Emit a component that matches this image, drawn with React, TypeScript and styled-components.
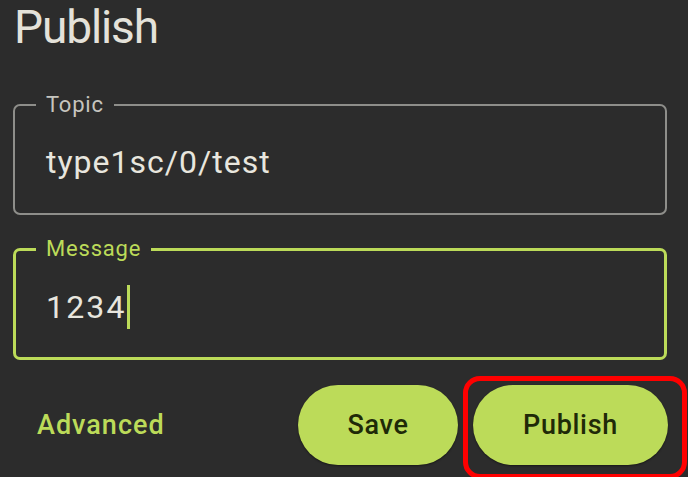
import styled, { createGlobalStyle } from 'styled-components'

const GlobalStyle = createGlobalStyle`
    html, body {
        margin: 0;
        padding: 0;
        background: #ffffff;
    }
    * {
        box-sizing: border-box;
    }
`

const lime = '#bcdb59'

const Screen = styled.main`
    height: 477px;
    background: #2c2c2c;
    padding: 0 21px 0 13px;
    display: flex;
    flex-direction: column;
    font-family: Roboto, 'Noto Sans', sans-serif;
    overflow: hidden;
`

const Title = styled.h1`
    margin: 0 0 0 1px;
    font-size: 46px;
    line-height: 54px;
    font-weight: 400;
    letter-spacing: -1.1px;
    color: #e4e2da;
`

// outlined text field, the legend sits in the top border
const Field = styled.fieldset<{ $focused?: boolean }>`
    margin: ${(p) => (p.$focused ? '22px' : '39px')} 0 0;
    padding: ${(p) => (p.$focused ? '24px 0 28px 0' : '25px 0 31px 0')};
    border: ${(p) => (p.$focused ? `3px solid ${lime}` : '2px solid #8e8e8a')};
    border-radius: 7px;
    min-width: 0;
`

const Label = styled.legend<{ $focused?: boolean }>`
    margin-left: ${(p) => (p.$focused ? '20px' : '21px')};
    padding: 0 10px;
    font-size: 22px;
    line-height: 24px;
    letter-spacing: 0.8px;
    color: ${(p) => (p.$focused ? lime : '#c6c5bf')};
`

const Value = styled.div<{ $indent: number; $tracking: number }>`
    padding-left: ${(p) => p.$indent}px;
    font-size: 32px;
    line-height: 40px;
    letter-spacing: ${(p) => p.$tracking}px;
    color: #e8e6de;
    display: flex;
    align-items: center;
`

const Caret = styled.span`
    display: inline-block;
    width: 3px;
    height: 44px;
    background: ${lime};
`

const Actions = styled.div`
    margin-top: 25px;
    display: flex;
    align-items: center;
    gap: 15px;
`

const TextButton = styled.button`
    margin-right: auto;
    padding: 0 0 0 24px;
    background: none;
    border: none;
    font-family: inherit;
    font-size: 27px;
    font-weight: 500;
    letter-spacing: 1px;
    color: ${lime};
`

const Pill = styled.button<{ $width: number }>`
    width: ${(p) => p.$width}px;
    height: 80px;
    border: none;
    border-radius: 40px;
    background: ${lime};
    box-shadow: 0 1px 2px rgba(0, 0, 0, 0.45);
    font-family: inherit;
    font-size: 27px;
    font-weight: 500;
    letter-spacing: 0.7px;
    color: #1f2a08;
`

const Highlight = styled.div`
    position: relative;
    margin-right: -1px;

    &::after {
        content: '';
        position: absolute;
        left: -10px;
        right: -19px;
        top: -9px;
        bottom: -14px;
        border: 5px solid #ff0000;
        border-radius: 17px;
        pointer-events: none;
    }
`

export default function App() {
    return (
        <>
            <GlobalStyle />
            <Screen>
                <Title>Publish</Title>

                <Field>
                    <Label>Topic</Label>
                    <Value $indent={31} $tracking={1}>
                        type1sc/0/test
                    </Value>
                </Field>

                <Field $focused>
                    <Label $focused>Message</Label>
                    <Value $indent={30} $tracking={2.2}>
                        1234
                        <Caret />
                    </Value>
                </Field>

                <Actions>
                    <TextButton>Advanced</TextButton>
                    <Pill $width={160}>Save</Pill>
                    <Highlight>
                        <Pill $width={195}>Publish</Pill>
                    </Highlight>
                </Actions>
            </Screen>
        </>
    )
}
